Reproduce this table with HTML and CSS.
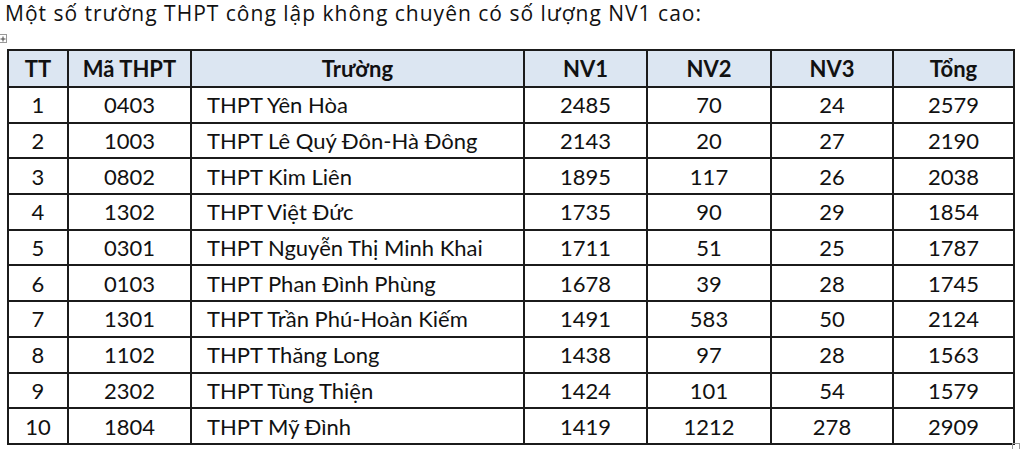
FILE: index.html
```html
<!DOCTYPE html>
<html lang="vi">
<head>
<meta charset="utf-8">
<link rel="stylesheet" href="styles.css">
</head>
<body>
<div class="page">
  <p class="title">Một số trường THPT công lập không chuyên có số lượng NV1 cao:</p>
  <div class="table-wrap">
    <span class="move-handle"><svg width="6" height="6" viewBox="0 0 6 6"><path d="M3 0.5V5.5M0.5 3H5.5" stroke="#444" stroke-width="1"/></svg></span>
    <table class="data">
      <colgroup>
        <col class="c-tt"><col class="c-ma"><col class="c-name"><col class="c-nv1"><col class="c-nv2"><col class="c-nv3"><col class="c-sum">
      </colgroup>
      <thead>
        <tr><th>TT</th><th>Mã THPT</th><th>Trường</th><th>NV1</th><th>NV2</th><th>NV3</th><th>Tổng</th></tr>
      </thead>
      <tbody>
        <tr><td>1</td><td>0403</td><td class="name">THPT Yên Hòa</td><td>2485</td><td>70</td><td>24</td><td>2579</td></tr>
        <tr><td>2</td><td>1003</td><td class="name">THPT Lê Quý Đôn-Hà Đông</td><td>2143</td><td>20</td><td>27</td><td>2190</td></tr>
        <tr><td>3</td><td>0802</td><td class="name">THPT Kim Liên</td><td>1895</td><td>117</td><td>26</td><td>2038</td></tr>
        <tr><td>4</td><td>1302</td><td class="name">THPT Việt Đức</td><td>1735</td><td>90</td><td>29</td><td>1854</td></tr>
        <tr><td>5</td><td>0301</td><td class="name">THPT Nguyễn Thị Minh Khai</td><td>1711</td><td>51</td><td>25</td><td>1787</td></tr>
        <tr><td>6</td><td>0103</td><td class="name">THPT Phan Đình Phùng</td><td>1678</td><td>39</td><td>28</td><td>1745</td></tr>
        <tr><td>7</td><td>1301</td><td class="name">THPT Trần Phú-Hoàn Kiếm</td><td>1491</td><td>583</td><td>50</td><td>2124</td></tr>
        <tr><td>8</td><td>1102</td><td class="name">THPT Thăng Long</td><td>1438</td><td>97</td><td>28</td><td>1563</td></tr>
        <tr><td>9</td><td>2302</td><td class="name">THPT Tùng Thiện</td><td>1424</td><td>101</td><td>54</td><td>1579</td></tr>
        <tr><td>10</td><td>1804</td><td class="name">THPT Mỹ Đình</td><td>1419</td><td>1212</td><td>278</td><td>2909</td></tr>
      </tbody>
    </table>
    <span class="resize-handle"></span>
  </div>
</div>
</body>
</html>
```
FILE: styles.css
```css
html, body {
  margin: 0;
  padding: 0;
  background: #ffffff;
}
.page {
  width: 1020px;
  height: 449px;
  overflow: hidden;
  position: relative;
}
.title {
  margin: 0;
  padding: 0 0 0 5px;
  height: 28px;
  font-family: "Open Sans", "Liberation Sans", sans-serif;
  font-size: 21px;
  line-height: 26px;
  color: #111;
  letter-spacing: 1px;
  white-space: nowrap;
}
.table-wrap {
  position: relative;
  margin: 21px 0 0 7px;
  width: 1006px;
}
.move-handle {
  position: absolute;
  left: -7px;
  top: -15px;
  width: 6px;
  height: 7px;
  border: 1px solid #999;
  border-left: none;
  background: #fff;
  display: flex;
  align-items: center;
  justify-content: center;
}
.resize-handle {
  position: absolute;
  right: -7px;
  bottom: -6px;
  width: 6px;
  height: 6px;
  border: 1px solid #999;
}
.data {
  border-collapse: collapse;
  table-layout: fixed;
  width: 1006px;
  font-family: Lato, "Open Sans", sans-serif;
  font-size: 22px;
  color: #111;
}
.c-tt { width: 60px; }
.c-ma { width: 123px; }
.c-name { width: 333px; }
.c-nv1 { width: 123px; }
.c-nv2 { width: 124px; }
.c-nv3 { width: 122px; }
.c-sum { width: 121px; }
.data th, .data td {
  border: 2px solid #1b1b1b;
  text-align: center;
  padding: 0;
  height: 33.7px;
  line-height: 33px;
}
.data th {
  background: #dce6f2;
  font-weight: 700;
  height: 35px;
}
.data td.name {
  text-align: left;
  padding-left: 15px;
}
```
